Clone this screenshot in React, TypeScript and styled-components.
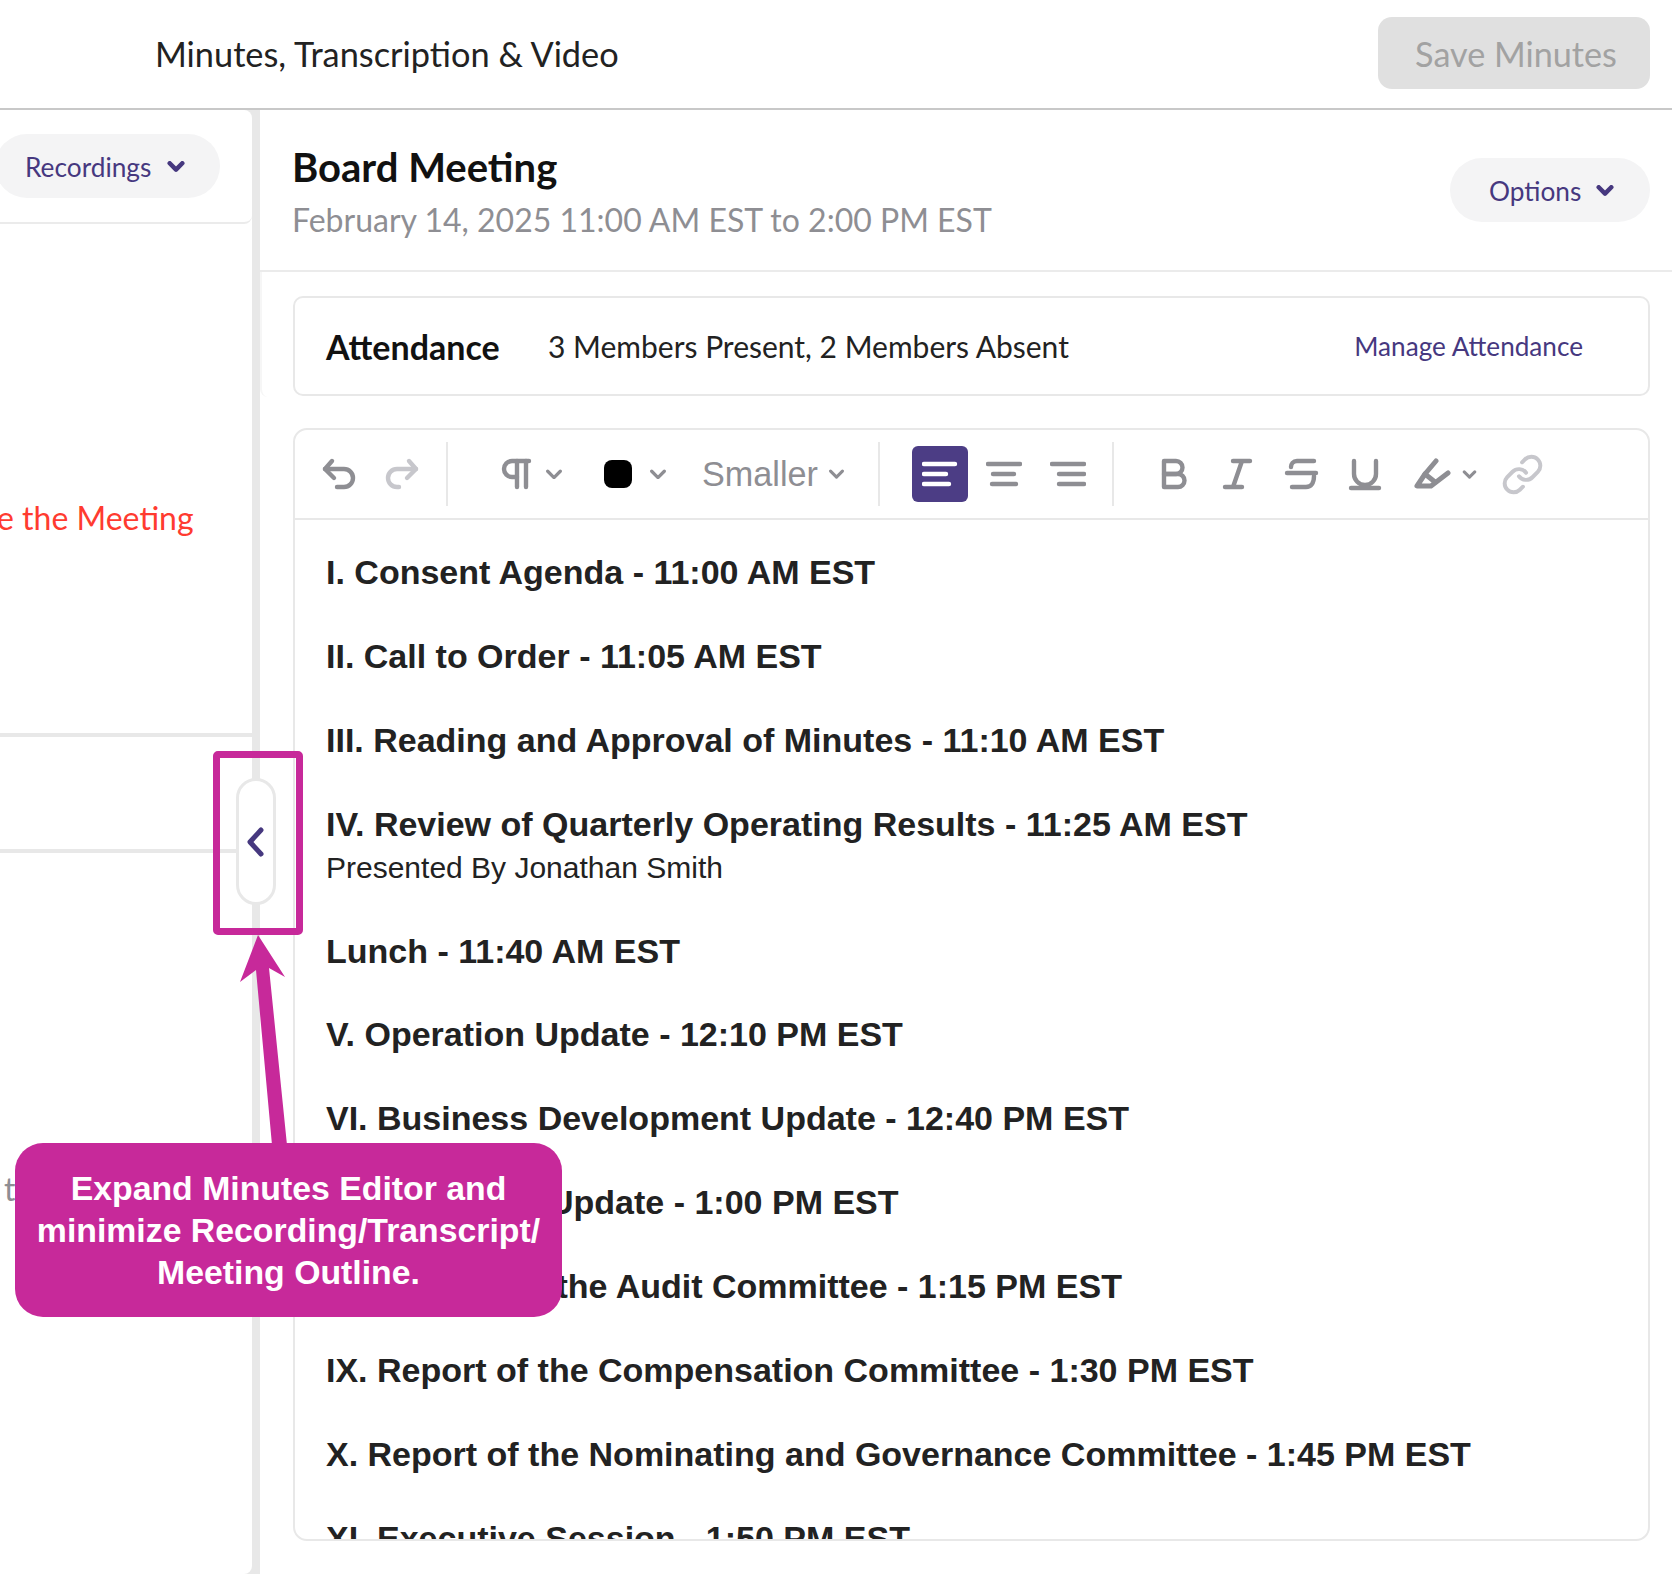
import React from "react";
import styled, { createGlobalStyle } from "styled-components";
import { Link as LinkIcon } from "lucide-react";

const purple = "#46387f";
const line = "#e8e8e8";
const gray = "#8e8e93";
const light = "#c7c7cc";

const Global = createGlobalStyle`
  html, body { margin: 0; padding: 0; background: #fff; }
  body { font-family: "Lato", "Liberation Sans", sans-serif; }
`;

const Page = styled.div`
  width: 1672px;
  height: 1574px;
  position: relative;
  overflow: hidden;
  display: flex;
  flex-direction: column;
  background: #fff;
`;

const TopBar = styled.header`
  flex: none;
  box-sizing: border-box;
  height: 110px;
  border-bottom: 2px solid #c8c8c8;
  display: flex;
  align-items: center;
  justify-content: space-between;
  padding: 0 22px 2px 155px;
`;

const PageTitle = styled.h1`
  margin: 0;
  font-size: 34.35px;
  font-weight: 400;
  color: #222;
`;

const SaveButton = styled.button`
  width: 272px;
  height: 72px;
  border: 0;
  border-radius: 14px;
  background: #e0e0e0;
  color: #a2a2a2;
  font-family: inherit;
  font-size: 34.2px;
  font-weight: 400;
  padding: 0 0 0 4px;
`;

const Body = styled.div`
  flex: 1;
  display: flex;
  background: ${line};
  min-height: 0;
`;

const LeftPanel = styled.aside`
  width: 252px;
  flex: none;
  background: #fff;
  border-radius: 0 8px 8px 0;
  display: flex;
  flex-direction: column;
  overflow: hidden;
`;

const RecordingsBar = styled.div`
  height: 114px;
  flex: none;
  box-sizing: border-box;
  border-bottom: 2px solid #ebebeb;
  border-bottom-right-radius: 8px;
  padding-top: 24px;
`;

const Pill = styled.button<{ $width: number; $pad: number; $gap: number }>`
  width: ${(p) => p.$width}px;
  height: 64px;
  border: 0;
  border-radius: 32px;
  background: #f4f4f5;
  color: ${purple};
  font-family: inherit;
  font-size: 26.25px;
  line-height: 32px;
  display: flex;
  align-items: center;
  gap: ${(p) => p.$gap}px;
  padding: 1px 0 0 ${(p) => p.$pad}px;
`;

const RecordingsPill = styled(Pill)`
  margin-left: -5px;
`;

const LeaveRow = styled.div`
  height: 513px;
  flex: none;
  box-sizing: border-box;
  border-bottom: 4px solid ${line};
  padding-top: 274px;
  text-indent: -3px;
  color: #ff3b30;
  font-size: 32px;
  line-height: 40px;
  white-space: nowrap;
`;

const EmptyRow = styled.div`
  height: 116px;
  flex: none;
  box-sizing: border-box;
  border-bottom: 4px solid ${line};
`;

const LeftRest = styled.div`
  flex: 1;
  padding: 316px 0 0 4px;
  color: ${gray};
  font-size: 32px;
  line-height: 40px;
`;

const RightPanel = styled.main`
  flex: 1;
  margin-left: 8px;
  background: #fff;
  display: flex;
  flex-direction: column;
  min-width: 0;
`;

const MeetingHeader = styled.div`
  height: 162px;
  flex: none;
  box-sizing: border-box;
  border-bottom: 2px solid #ebebeb;
  padding: 0 22px 0 32px;
  display: flex;
  align-items: center;
  justify-content: space-between;
`;

const MeetingHeading = styled.div`
  padding-top: 3px;
`;

const MeetingTitle = styled.h2`
  margin: 0;
  font-size: 40px;
  line-height: 52px;
  font-weight: 700;
  color: #111;
`;

const MeetingDate = styled.div`
  margin-top: 5px;
  font-size: 32px;
  line-height: 44px;
  color: ${gray};
`;

const AttendanceWrap = styled.div`
  flex: none;
  padding: 24px 22px 0 31px;
  height: 125px;
  box-sizing: border-box;
  border-left: 2px solid #f6f6f6;
  border-bottom-left-radius: 8px;
`;

const AttendanceCard = styled.section`
  height: 100px;
  box-sizing: border-box;
  border: 2px solid ${line};
  border-radius: 10px;
  display: flex;
  align-items: center;
  padding: 0 65px 0 31px;
`;

const AttendanceLabel = styled.strong`
  font-size: 34px;
  font-weight: 700;
  color: #111;
  width: 222px;
  flex: none;
`;

const AttendanceSummary = styled.span`
  flex: 1;
  font-size: 30px;
  color: #222;
`;

const ManageLink = styled.a`
  font-size: 26.15px;
  color: ${purple};
`;

const Editor = styled.section`
  margin: 31px 22px 0 33px;
  height: 1113px;
  box-sizing: border-box;
  border: 2px solid ${line};
  border-radius: 14px;
  overflow: hidden;
  display: flex;
  flex-direction: column;
`;

const Toolbar = styled.div`
  height: 90px;
  flex: none;
  box-sizing: border-box;
  border-bottom: 2px solid ${line};
  display: flex;
  align-items: center;
`;

const ToolGlyph = styled.svg<{ $ml: number }>`
  flex: none;
  margin-left: ${(p) => p.$ml}px;
  fill: none;
  stroke: currentColor;
  stroke-width: 4.4;
  stroke-linecap: round;
  stroke-linejoin: round;
`;

const Tool = styled.span<{ $tone: string }>`
  display: flex;
  color: ${(p) => p.$tone};
`;

const LinkTool = styled(LinkIcon)`
  flex: none;
  margin-left: 24px;
  color: ${light};
`;

const Separator = styled.span<{ $ml: number }>`
  width: 2px;
  height: 64px;
  flex: none;
  margin-left: ${(p) => p.$ml}px;
  background: ${line};
`;

const Swatch = styled.span`
  width: 28px;
  height: 28px;
  flex: none;
  margin-left: 41px;
  border-radius: 8px;
  background: #000;
`;

const SizeLabel = styled.span`
  flex: none;
  width: 115px;
  margin-left: 35px;
  font-family: "Liberation Sans", Arial, sans-serif;
  font-size: 34.2px;
  color: ${gray};
  white-space: nowrap;
`;

const AlignButton = styled.span<{ $active?: boolean; $ml: number }>`
  width: 56px;
  height: 56px;
  flex: none;
  margin-left: ${(p) => p.$ml}px;
  border-radius: 6px;
  display: flex;
  align-items: center;
  justify-content: center;
  background: ${(p) => (p.$active ? "#4c3d85" : "transparent")};
  color: ${(p) => (p.$active ? "#fff" : gray)};
`;

const AlignGlyph = styled.svg`
  fill: none;
  stroke: currentColor;
  stroke-width: 4.4;
  stroke-linecap: round;
`;

const EditorBody = styled.div`
  flex: 1;
  min-height: 0;
  overflow: hidden;
  padding: 30px 31px 0;
  font-family: "Liberation Sans", Arial, sans-serif;
  color: #222;
`;

const AgendaItem = styled.div`
  margin-bottom: 39.9px;
`;

const AgendaTitle = styled.div`
  font-size: 34px;
  line-height: 44px;
  font-weight: 700;
  white-space: nowrap;
`;

const AgendaNote = styled.div`
  font-size: 30px;
  line-height: 43px;
`;

const TogglePill = styled.button`
  position: absolute;
  left: 236px;
  top: 778px;
  width: 40px;
  height: 127px;
  box-sizing: border-box;
  border: 3px solid ${line};
  border-radius: 20px;
  background: #fff;
  padding: 0;
  display: flex;
  align-items: center;
  justify-content: center;
  color: ${purple};
`;

const HighlightBox = styled.div`
  position: absolute;
  left: 213px;
  top: 751px;
  width: 90px;
  height: 184px;
  box-sizing: border-box;
  border: 7px solid #c7299a;
  border-radius: 5px;
`;

const ArrowDrawing = styled.svg`
  position: absolute;
  left: 230px;
  top: 930px;
`;

const Callout = styled.div`
  position: absolute;
  left: 15px;
  top: 1143px;
  width: 547px;
  height: 174px;
  border-radius: 28px;
  background: #c7299a;
  color: #fff;
  font-family: "Liberation Sans", Arial, sans-serif;
  font-size: 33.8px;
  line-height: 42px;
  font-weight: 700;
  text-align: center;
  box-sizing: border-box;
  padding-top: 24px;
`;

const Chevron = ({ w, sw, ml = 0 }: { w: number; sw: number; ml?: number }) => (
  <ToolGlyph $ml={ml} width={w} height={w * 0.6} viewBox="0 0 20 12" style={{ strokeWidth: sw }}>
    <path d="M3 2.5 L10 9.5 L17 2.5" />
  </ToolGlyph>
);

const agenda: { title: string; note?: string }[] = [
  { title: "I. Consent Agenda - 11:00 AM EST" },
  { title: "II. Call to Order - 11:05 AM EST" },
  { title: "III. Reading and Approval of Minutes - 11:10 AM EST" },
  { title: "IV. Review of Quarterly Operating Results - 11:25 AM EST", note: "Presented By Jonathan Smith" },
  { title: "Lunch - 11:40 AM EST" },
  { title: "V. Operation Update - 12:10 PM EST" },
  { title: "VI. Business Development Update - 12:40 PM EST" },
  { title: "VII. Research Update - 1:00 PM EST" },
  { title: "VIII. Report of the Audit Committee - 1:15 PM EST" },
  { title: "IX. Report of the Compensation Committee - 1:30 PM EST" },
  { title: "X. Report of the Nominating and Governance Committee - 1:45 PM EST" },
  { title: "XI. Executive Session - 1:50 PM EST" },
];

const Glyph = ({ ml, tone, w = 36, children }: { ml: number; tone: string; w?: number; children: React.ReactNode }) => (
  <Tool $tone={tone}>
    <ToolGlyph $ml={ml} width={w} height={36} viewBox={`0 0 ${w} 36`}>
      {children}
    </ToolGlyph>
  </Tool>
);

export default function App() {
  return (
    <Page>
      <Global />
      <TopBar>
        <PageTitle>Minutes, Transcription &amp; Video</PageTitle>
        <SaveButton>Save Minutes</SaveButton>
      </TopBar>
      <Body>
        <LeftPanel>
          <RecordingsBar>
            <RecordingsPill $width={225} $pad={30} $gap={16}>
              Recordings
              <Chevron w={18} sw={5} />
            </RecordingsPill>
          </RecordingsBar>
          <LeaveRow>e the Meeting</LeaveRow>
          <EmptyRow />
          <LeftRest>t</LeftRest>
        </LeftPanel>
        <RightPanel>
          <MeetingHeader>
            <MeetingHeading>
              <MeetingTitle>Board Meeting</MeetingTitle>
              <MeetingDate>February 14, 2025 11:00 AM EST to 2:00 PM EST</MeetingDate>
            </MeetingHeading>
            <Pill $width={200} $pad={39} $gap={15}>
              Options
              <Chevron w={18} sw={5} />
            </Pill>
          </MeetingHeader>
          <AttendanceWrap>
            <AttendanceCard>
              <AttendanceLabel>Attendance</AttendanceLabel>
              <AttendanceSummary>3 Members Present, 2 Members Absent</AttendanceSummary>
              <ManageLink>Manage Attendance</ManageLink>
            </AttendanceCard>
          </AttendanceWrap>
          <Editor>
            <Toolbar>
              <Glyph ml={25} tone={gray}>
                <path d="M12 5 L5 13 L14 22" />
                <path d="M5 13 H24 a8 8 0 0 1 0 18 H17" />
              </Glyph>
              <Glyph ml={28} tone={light}>
                <path d="M25 5 L32 13 L23 22" />
                <path d="M32 13 H13 a8 8 0 0 0 0 18 H15" />
              </Glyph>
              <Separator $ml={26} />
              <Glyph ml={50} tone={gray}>
                <path d="M31 5 H14 a8 8 0 0 0 0 16 H19" />
                <path d="M19 5 V31" />
                <path d="M28 5 V31" />
              </Glyph>
              <Tool $tone={gray}>
                <Chevron w={18} sw={3.6} ml={11} />
              </Tool>
              <Swatch />
              <Tool $tone={gray}>
                <Chevron w={18} sw={3.6} ml={17} />
              </Tool>
              <SizeLabel>Smaller</SizeLabel>
              <Tool $tone={gray}>
                <Chevron w={17} sw={3.6} ml={11} />
              </Tool>
              <Separator $ml={33} />
              <AlignButton $active $ml={32}>
                <AlignGlyph width={36} height={28} viewBox="0 0 36 28">
                  <path d="M2 4 H33 M2 14 H24 M2 24 H27" />
                </AlignGlyph>
              </AlignButton>
              <AlignButton $ml={8}>
                <AlignGlyph width={36} height={28} viewBox="0 0 36 28">
                  <path d="M2 4 H34 M7 14 H28 M6 24 H30" />
                </AlignGlyph>
              </AlignButton>
              <AlignButton $ml={8}>
                <AlignGlyph width={36} height={28} viewBox="0 0 36 28">
                  <path d="M2 4 H34 M9 14 H34 M9 24 H34" />
                </AlignGlyph>
              </AlignButton>
              <Separator $ml={16} />
              <Glyph ml={41} tone={gray}>
                <path d="M9 5 H21 a6.5 6.5 0 0 1 0 13 H9 Z" />
                <path d="M9 18 H23 a6.5 6.5 0 0 1 0 13 H9 Z" />
              </Glyph>
              <Glyph ml={28} tone={gray}>
                <path d="M14 5 H31 M6 31 H23 M23 5 L14 31" />
              </Glyph>
              <Glyph ml={28} tone={gray}>
                <path d="M31 5 H14 C10 5 8 8 8 11" />
                <path d="M4 17 H33" />
                <path d="M31 20 C31 27 28 31 23 31 H9" />
              </Glyph>
              <Glyph ml={28} tone={gray}>
                <path d="M7 5 V18 a11 11 0 0 0 22 0 V5" />
                <path d="M4 32 H32" />
              </Glyph>
              <Glyph ml={28} tone={gray} w={40}>
                <path d="M25 5 L14 18 L6 30 H20 L37 17" strokeWidth="5" />
                <path d="M14 18 L24 26" strokeWidth="5" />
              </Glyph>
              <Tool $tone={gray}>
                <Chevron w={15} sw={4} ml={11} />
              </Tool>
              <LinkTool size={43} strokeWidth={2.2} />
            </Toolbar>
            <EditorBody>
              {agenda.map((item) => (
                <AgendaItem key={item.title}>
                  <AgendaTitle>{item.title}</AgendaTitle>
                  {item.note && <AgendaNote>{item.note}</AgendaNote>}
                </AgendaItem>
              ))}
            </EditorBody>
          </Editor>
        </RightPanel>
      </Body>

      <TogglePill aria-label="Collapse">
        <svg width="20" height="30" viewBox="0 0 20 30" fill="none" stroke="currentColor" strokeWidth="5" strokeLinecap="round" strokeLinejoin="round">
          <path d="M15 3 L4 15 L15 27" />
        </svg>
      </TogglePill>
      <HighlightBox />
      <ArrowDrawing width="70" height="220" viewBox="0 0 70 220" fill="#c7299a">
        <polygon points="28,5 55,47 39,38 57,215 42,215 26,40 10,52" />
      </ArrowDrawing>
      <Callout>
        Expand Minutes Editor and
        <br />
        minimize Recording/Transcript/
        <br />
        Meeting Outline.
      </Callout>
    </Page>
  );
}
